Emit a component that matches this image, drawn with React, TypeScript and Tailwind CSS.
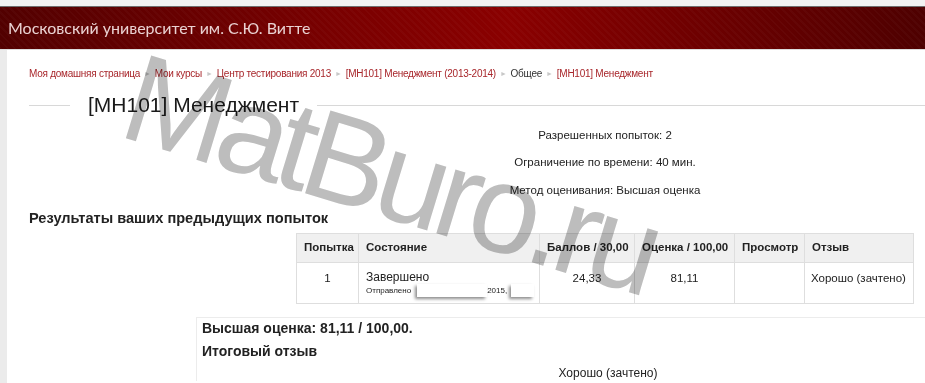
import React from 'react';

const crumbs = [
    { label: 'Моя домашняя страница', link: true },
    { label: 'Мои курсы', link: true },
    { label: 'Центр тестирования 2013', link: true },
    { label: '[MH101] Менеджмент (2013-2014)', link: true },
    { label: 'Общее', link: false },
    { label: '[MH101] Менеджмент', link: true },
];

const cols = [
    { title: 'Попытка', w: 'w-[62px]' },
    { title: 'Состояние', w: 'w-[181px]' },
    { title: 'Баллов / 30,00', w: 'w-[95px]' },
    { title: 'Оценка / 100,00', w: 'w-[100px]' },
    { title: 'Просмотр', w: 'w-[70px]' },
    { title: 'Отзыв', w: 'w-[109px]' },
];

function Redacted({ w }: { w: string }) {
    return <span className={`inline-block ${w} h-[13px] bg-white align-middle shadow-[-2px_2px_3px_rgba(0,0,0,0.45)]`} />;
}

export default function App() {
    return (
        <div className="relative w-[925px] h-[383px] overflow-hidden bg-white font-['Liberation_Sans',Arial,sans-serif] text-[#222]">
            <div className="h-[6px] bg-[#f2f2f2]" />
            <header className="h-[43px] border-t border-[#6e6e6e] flex items-center pl-[8px] bg-[repeating-linear-gradient(45deg,rgba(255,255,255,0.025)_0px,rgba(255,255,255,0.025)_2px,transparent_2px,transparent_5px),linear-gradient(90deg,#520000_0%,#780000_35%,#8a0000_55%,#680000_80%,#4e0000_100%)]">
                <span className="font-['Lato',sans-serif] text-[16px] text-[#ead2d2] pb-[1px]">Московский университет им. С.Ю. Витте</span>
            </header>
            <div className="flex border-t border-[#dcdcdc] h-[334px]">
                <div className="w-[7px] shrink-0 bg-[#ebebeb]" />
                <main className="w-[1152px] shrink-0 ml-[22px]">
                    <nav className="pt-[17px] text-[10px] tracking-[-0.25px] leading-[14px] flex items-center whitespace-nowrap">
                        {crumbs.map((c, i) => (
                            <span key={i} className="flex items-center">
                                {i > 0 && <span className="text-[7px] text-[#c8c8c8] mx-[4px]">►</span>}
                                <span className={c.link ? 'text-[#a8262b]' : 'text-[#333]'}>{c.label}</span>
                            </span>
                        ))}
                    </nav>

                    <div className="flex items-center mt-[11px] h-[26px]">
                        <div className="w-[41px] h-px bg-[#d8d8d8]" />
                        <h1 className="mx-[18px] text-[21px] leading-[26px] whitespace-nowrap text-[#1a1a1a]">[MH101] Менеджмент</h1>
                        <div className="flex-1 h-px bg-[#d8d8d8]" />
                    </div>

                    <div className="text-center text-[11.5px] leading-[15px] mt-[10px]">
                        <p>Разрешенных попыток: 2</p>
                        <p className="mt-[12px]">Ограничение по времени: 40 мин.</p>
                        <p className="mt-[13px]">Метод оценивания: Высшая оценка</p>
                    </div>

                    <h2 className="mt-[11px] text-[14.6px] leading-[18px] font-bold">Результаты ваших предыдущих попыток</h2>

                    <table className="mx-auto mt-[6px] w-[617px] table-fixed border-collapse text-[11.5px]">
                        <thead>
                            <tr className="bg-[#f0f0f0] h-[29px]">
                                {cols.map(c => (
                                    <th key={c.title} className={`${c.w} border border-[#dedede] px-[7px] text-left font-bold whitespace-nowrap`}>{c.title}</th>
                                ))}
                            </tr>
                        </thead>
                        <tbody>
                            <tr className="h-[41px] align-top">
                                <td className="border border-[#dedede] text-center pt-[7px]">1</td>
                                <td className="border border-[#dedede] px-[7px] pt-[7px]">
                                    <div className="leading-[14px] text-[12px]">Завершено</div>
                                    <div className="text-[8px] leading-[13px] whitespace-nowrap">
                                        Отправлено<span className="ml-[6px]" /><Redacted w="w-[70px]" />2015,<span className="ml-[4px]" /><Redacted w="w-[23px]" />
                                    </div>
                                </td>
                                <td className="border border-[#dedede] text-center pt-[7px]">24,33</td>
                                <td className="border border-[#dedede] text-center pt-[7px]">81,11</td>
                                <td className="border border-[#dedede]" />
                                <td className="border border-[#dedede] px-[6px] pt-[7px] whitespace-nowrap">Хорошо (зачтено)</td>
                            </tr>
                        </tbody>
                    </table>

                    <section className="mx-auto mt-[13px] w-[818px] border-t border-l border-[#ececec] pl-[5px]">
                        <p className="text-[14px] leading-[17px] font-bold pt-[2px]">Высшая оценка: 81,11 / 100,00.</p>
                        <p className="text-[14px] leading-[17px] font-bold mt-[6px]">Итоговый отзыв</p>
                        <p className="text-[12px] leading-[15px] text-center mt-[6px]">Хорошо (зачтено)</p>
                    </section>
                </main>
            </div>

            <span className="pointer-events-none absolute left-[147px] top-[34px] origin-top-left rotate-[17deg] whitespace-nowrap leading-none text-[126px] tracking-[-0.06em] text-[#bdbdbd] mix-blend-multiply font-['Liberation_Sans',Arial,sans-serif]">
                MatBuro.ru
            </span>
        </div>
    );
}
